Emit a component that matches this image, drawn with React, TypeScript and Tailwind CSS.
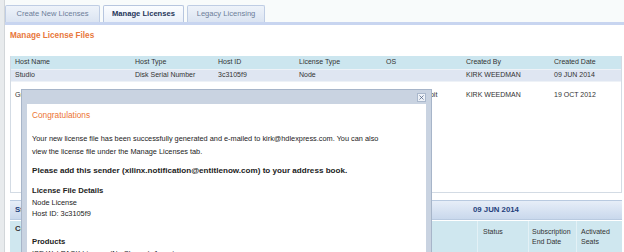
import { X } from 'lucide-react'

export default function App() {
    const cols = "grid grid-cols-[120px_83px_81px_87px_80px_88px_1fr]"

    const tabs = [
        { label: "Create New Licenses", w: "w-[95px]", active: false },
        { label: "Manage Licenses", w: "w-[81px]", active: true },
        { label: "Legacy Licensing", w: "w-[78px]", active: false },
    ]

    return (
        <div className="relative w-[624px] h-[252px] overflow-hidden bg-white font-['Liberation_Sans',Arial,sans-serif] text-[#333]">
            <div className="flex h-full">
                {/* page frame strip */}
                <div className="w-[5px] shrink-0 bg-[#e8ebed] border-r border-[#d2d6d9]" />

                <div className="flex-1 flex flex-col">
                    {/* Tabs */}
                    <div className="bg-[#f8fbfb] pt-[5px]">
                        <div className="flex gap-[3px]">
                            {tabs.map((t, i) => (
                                <div
                                    key={i}
                                    className={`${t.w} h-[17px] flex items-center justify-center rounded-t-[2px] border border-b-0 text-[7.6px] ${
                                        t.active
                                            ? "bg-gradient-to-b from-[#fbfdff] to-[#eaf0f9] border-[#b7c6df] font-bold text-[#25365a]"
                                            : "bg-gradient-to-b from-[#eef3fa] to-[#dbe4f2] border-[#bfcde4] text-[#6c7d99]"
                                    }`}
                                >
                                    {t.label}
                                </div>
                            ))}
                        </div>
                        <div className="h-[3px] bg-[#c8d5f0]" />
                    </div>

                    <div className="px-[5px] pr-[2px]">
                        <h2 className="mt-[6px] h-[10px] leading-[10px] text-[8.2px] font-bold text-[#e8773c]">
                            Manage License Files
                        </h2>

                        {/* License files table */}
                        <div className="mt-[15px] h-[137px] border border-t-0 border-[#d3dbe4]">
                            <div className={`${cols} h-[13px] items-center bg-[#cce6ef] text-[7px]`}>
                                {["Host Name", "Host Type", "Host ID", "License Type", "OS", "Created By", "Created Date"].map((h, i) => (
                                    <div key={i} className="pl-[4px] whitespace-nowrap">{h}</div>
                                ))}
                            </div>
                            <div className={`${cols} h-[13px] items-center bg-[#dfe6f2] border-y border-[#eef2f7] text-[7px]`}>
                                {["Studio", "Disk Serial Number", "3c3105f9", "Node", "", "KIRK WEEDMAN", "09 JUN 2014"].map((c, i) => (
                                    <div key={i} className="pl-[4px] whitespace-nowrap">{c}</div>
                                ))}
                            </div>
                            <div className={`${cols} h-[26px] pt-[8px] text-[7px] leading-[10px]`}>
                                {["Grace", "Disk Serial Number", "7a21b0c4", "Node", "Windows 7 64bit", "KIRK WEEDMAN", "19 OCT 2012"].map((c, i) => (
                                    <div key={i} className="pl-[4px] whitespace-nowrap">{c}</div>
                                ))}
                            </div>
                        </div>

                        {/* Subscription section */}
                        <div className="mt-[7px] h-[20px] flex items-center bg-gradient-to-b from-[#e7eef8] to-[#c9d8ec] border-y border-[#b9cae0] text-[7.8px] font-bold text-[#1f3f7c]">
                            <div className="pl-[5px] w-[463px]">Studio</div>
                            <div>09 JUN 2014</div>
                        </div>
                        <div className="mt-[1px] h-[31px] bg-[#cfe7ef] text-[7px] leading-[10px] flex">
                            <div className="pl-[5px] pt-[3px] w-[467px] text-[7.8px] font-bold text-[#333]">Component</div>
                            <div className="w-[51px] pt-[6px] pl-[5px] border-l border-[#e3f1f6]">Status</div>
                            <div className="w-[48px] pt-[6px] pl-[3px] border-l border-[#e3f1f6]">Subscription<br />End Date</div>
                            <div className="flex-1 pt-[6px] pl-[4px] border-l border-[#e3f1f6]">Activated<br />Seats</div>
                        </div>
                    </div>
                </div>
            </div>

            {/* Congratulations dialog */}
            <div className="absolute left-[21px] top-[89px] w-[411px] h-[180px] bg-[#c9d3e1] border border-[#a7b5c9] px-[5px]">
                <div className="h-[14px] flex items-center justify-end">
                    <div className="w-[9px] h-[9px] flex items-center justify-center bg-[#eef2f8] border border-[#aab8cc]">
                        <X size={7} strokeWidth={2.5} className="text-[#4a5d7e]" />
                    </div>
                </div>
                <div className="h-full bg-white pt-[6px] px-[5px] text-[7.35px] text-[#222]">
                    <p className="h-[10px] leading-[10px] text-[8.3px] text-[#ec7434]">Congratulations</p>
                    <p className="mt-[13px] leading-[12.5px]">
                        Your new license file has been successfully generated and e-mailed to kirk@hdlexpress.com. You can also<br />
                        view the license file under the Manage Licenses tab.
                    </p>
                    <p className="mt-[7px] leading-[12px] text-[8.1px] font-bold">
                        Please add this sender (xilinx.notification@entitlenow.com) to your address book.
                    </p>
                    <p className="mt-[8px] leading-[12px] text-[7.7px] font-bold">License File Details</p>
                    <p className="leading-[11px]">Node License</p>
                    <p className="leading-[11px]">Host ID: 3c3105f9</p>
                    <p className="mt-[17px] leading-[12px] text-[7.7px] font-bold">Products</p>
                    <p className="leading-[12px]">ISE WebPACK License (No Charge): 1 seats</p>
                </div>
            </div>
        </div>
    )
}
